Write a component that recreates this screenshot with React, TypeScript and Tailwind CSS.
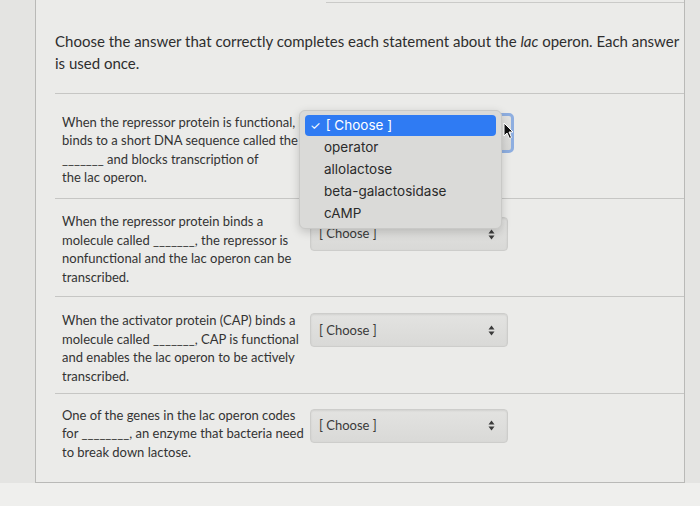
import { Fragment } from 'react';

type Question = {
  lines: string[];
  padTop: string;
  height: string;
  selectTop: string;
  focused?: boolean;
};

const questions: Question[] = [
  {
    lines: [
      'When the repressor protein is functional, it',
      'binds to a short DNA sequence called the',
      '_______ and blocks transcription of',
      'the lac operon.',
    ],
    padTop: 'pt-[19px]',
    height: 'h-[105px]',
    selectTop: 'mt-[1px]',
    focused: true,
  },
  {
    lines: [
      'When the repressor protein binds a',
      'molecule called _______, the repressor is',
      'nonfunctional and the lac operon can be',
      'transcribed.',
    ],
    padTop: 'pt-[13px]',
    height: 'h-[98px]',
    selectTop: 'mt-[5px]',
  },
  {
    lines: [
      'When the activator protein (CAP) binds a',
      'molecule called _______, CAP is functional',
      'and enables the lac operon to be actively',
      'transcribed.',
    ],
    padTop: 'pt-[14px]',
    height: 'h-[96px]',
    selectTop: 'mt-[2px]',
  },
  {
    lines: [
      'One of the genes in the lac operon codes',
      'for ________, an enzyme that bacteria need',
      'to break down lactose.',
    ],
    padTop: 'pt-[12px]',
    height: 'h-[89px]',
    selectTop: 'mt-[3px]',
  },
];

const options = ['operator', 'allolactose', 'beta-galactosidase', 'cAMP'];

function Arrows() {
  return (
    <svg width="7" height="11" viewBox="0 0 7 11" className="shrink-0">
      <path d="M3.5 0.5 L6.5 4.5 L0.5 4.5 Z" fill="#3a3a3a" />
      <path d="M3.5 10.5 L6.5 6.5 L0.5 6.5 Z" fill="#3a3a3a" />
    </svg>
  );
}

function Select({ focused }: { focused?: boolean }) {
  return (
    <div
      className={
        focused
          ? 'flex h-[40px] w-[212px] items-center justify-between rounded-[5px] border-[3px] border-[#8eaee0] bg-gradient-to-b from-[#e2e2e0] to-[#d8d8d6] pl-[11px] pr-[10px]'
          : 'flex h-[34px] w-[198px] items-center justify-between rounded-[4px] border border-[#cdcdcb] bg-gradient-to-b from-[#e3e3e1] to-[#d9d9d7] pl-[8px] pr-[12px] shadow-[inset_0_1px_2px_rgba(0,0,0,0.08)]'
      }
    >
      <span className="text-[13px] text-[#3a3a3a]">[ Choose ]</span>
      <Arrows />
    </div>
  );
}

function Dropdown() {
  return (
    <div className="absolute left-[263px] top-[110px] w-[203px] rounded-[6px] border border-[#c9c9c7] bg-[#dadad8] px-[5px] py-[4px] shadow-[0_3px_10px_rgba(0,0,0,0.18)] [font-family:Inter,'Noto_Sans',sans-serif]">
      <div className="flex h-[21px] items-center gap-[5px] rounded-[4px] bg-[#2f7bf3] pl-[5px] text-[13.5px] text-white">
        <span className="text-[12px] leading-none">✓</span>
        <span>[ Choose ]</span>
      </div>
      {options.map((o) => (
        <div key={o} className="flex h-[22px] items-center pl-[19px] text-[13.5px] text-[#2a2a2a]">
          {o}
        </div>
      ))}
    </div>
  );
}

function Cursor() {
  return (
    <svg width="12" height="18" viewBox="0 0 12 18" className="absolute left-[467px] top-[122px]">
      <path d="M1 1 L1 14 L4 11 L6.5 16.5 L8.5 15.5 L6 10 L10 10 Z" fill="#111" stroke="#fff" strokeWidth="1" />
    </svg>
  );
}

export default function App() {
  return (
    <div className="h-[506px] w-[700px] overflow-hidden bg-[#e4e4e2] [font-family:Lato,'Open_Sans',sans-serif]">
      <div className="relative ml-[35px] flex h-[483px] w-[650px] flex-col border-b border-l border-r border-[#b9b9b7] bg-[#ebebe9]">
        {/* previous card's edge at the very top */}
        <div className="ml-[290px] mt-[2px] h-px bg-[#cacac8]" />

        <p className="whitespace-nowrap pl-[19px] pt-[27px] text-[15px] leading-[22px] text-[#2e2e2e]">
          Choose the answer that correctly completes each statement about the <i>lac</i> operon. Each answer
          <br />
          is used once.
        </p>

        <div className="ml-[19px] mt-[19px] h-px bg-[#c6c6c4]" />

        {questions.map((q, i) => (
          <Fragment key={i}>
            <div className={`flex ${q.height} ${q.padTop} pl-[26px]`}>
              <div className="w-[242px] shrink-0 text-[13px] leading-[18.5px] text-[#333]">
                {q.lines.map((l) => (
                  <div key={l} className="whitespace-nowrap">
                    {l}
                  </div>
                ))}
              </div>
              <div className={q.focused ? 'ml-[-2px]' : `ml-[6px] ${q.selectTop}`}>
                <Select focused={q.focused} />
              </div>
            </div>
            {i < questions.length - 1 && <div className="ml-[19px] h-px bg-[#c6c6c4]" />}
          </Fragment>
        ))}

        <Dropdown />
        <Cursor />
      </div>
      <div className="h-[23px] bg-[#efefed]" />
    </div>
  );
}
